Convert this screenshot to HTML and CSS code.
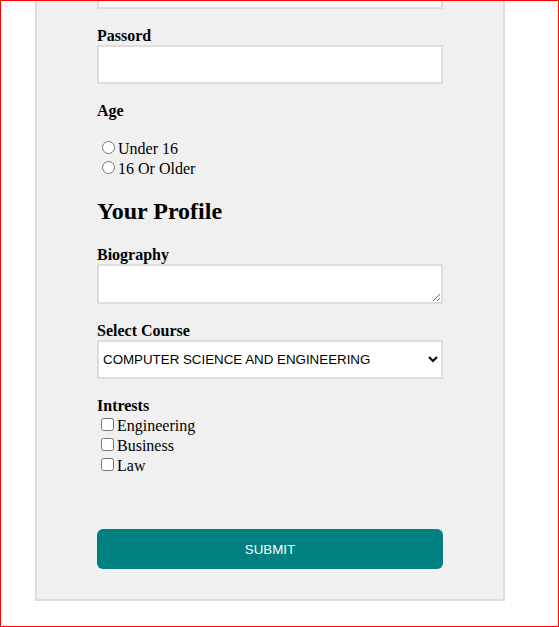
FILE: index.html
```html
<!DOCTYPE html>
<html lang="en">
<head>
<meta charset="utf-8">
<title>Registration Form</title>
<link rel="stylesheet" href="styles.css">
</head>
<body>
<div class="frame">
  <form class="card">
    <input class="field" id="email" type="email" aria-label="Email">

    <label class="label" for="pass">Passord</label>
    <input class="field" id="pass" type="password">

    <label class="label">Age</label>
    <div class="choices radios">
      <div class="option"><input type="radio" name="age">Under 16</div>
      <div class="option"><input type="radio" name="age">16 Or Older</div>
    </div>

    <h2 class="section-title">Your Profile</h2>

    <label class="label" for="bio">Biography</label>
    <textarea class="field area" id="bio" rows="1"></textarea>

    <label class="label" for="course">Select Course</label>
    <select class="field select" id="course">
      <option>COMPUTER SCIENCE AND ENGINEERING</option>
    </select>

    <label class="label">Intrests</label>
    <div class="choices checks">
      <div class="option"><input type="checkbox">Engineering</div>
      <div class="option"><input type="checkbox">Business</div>
      <div class="option"><input type="checkbox">Law</div>
    </div>

    <button class="submit" type="button">SUBMIT</button>
  </form>
</div>
</body>
</html>
```

FILE: styles.css
```css
html, body {
  margin: 0;
  padding: 0;
  background: #fff;
}

body {
  font-family: "Liberation Serif", "Times New Roman", serif;
  font-size: 16px;
  color: #000;
}

.frame {
  width: 559px;
  height: 627px;
  box-sizing: border-box;
  border: 1px solid #ff0000;
  overflow: hidden;
}

.card {
  width: 470px;
  box-sizing: border-box;
  margin: -64px 0 0 34px;
  padding: 30px 60px;
  background: #f0f0f0;
  border: 2px solid #dddddd;
}

.label {
  display: block;
  font-weight: bold;
}

.field {
  display: block;
  width: 100%;
  height: 39.5px;
  box-sizing: border-box;
  margin: 0 0 18px 0;
  padding: 10px;
  border: 2px solid #dddddd;
  background: #fff;
  font-family: "Liberation Sans", Arial, sans-serif;
  font-size: 13.333px;
  line-height: normal;
  outline: none;
}

.area {
  resize: vertical;
}

.select {
  padding: 0;
  color: #000;
}

.choices {
  margin-top: 18px;
}

.checks {
  margin-top: 0;
}

.section-title {
  font-size: 24px;
  font-weight: bold;
  margin: 20px 0 21px 0;
}

.submit {
  display: block;
  width: 100%;
  height: 40px;
  margin-top: 54px;
  border: none;
  border-radius: 6px;
  background: #008080;
  color: #fff;
  font-family: "Liberation Sans", Arial, sans-serif;
  font-size: 13.333px;
}
```
